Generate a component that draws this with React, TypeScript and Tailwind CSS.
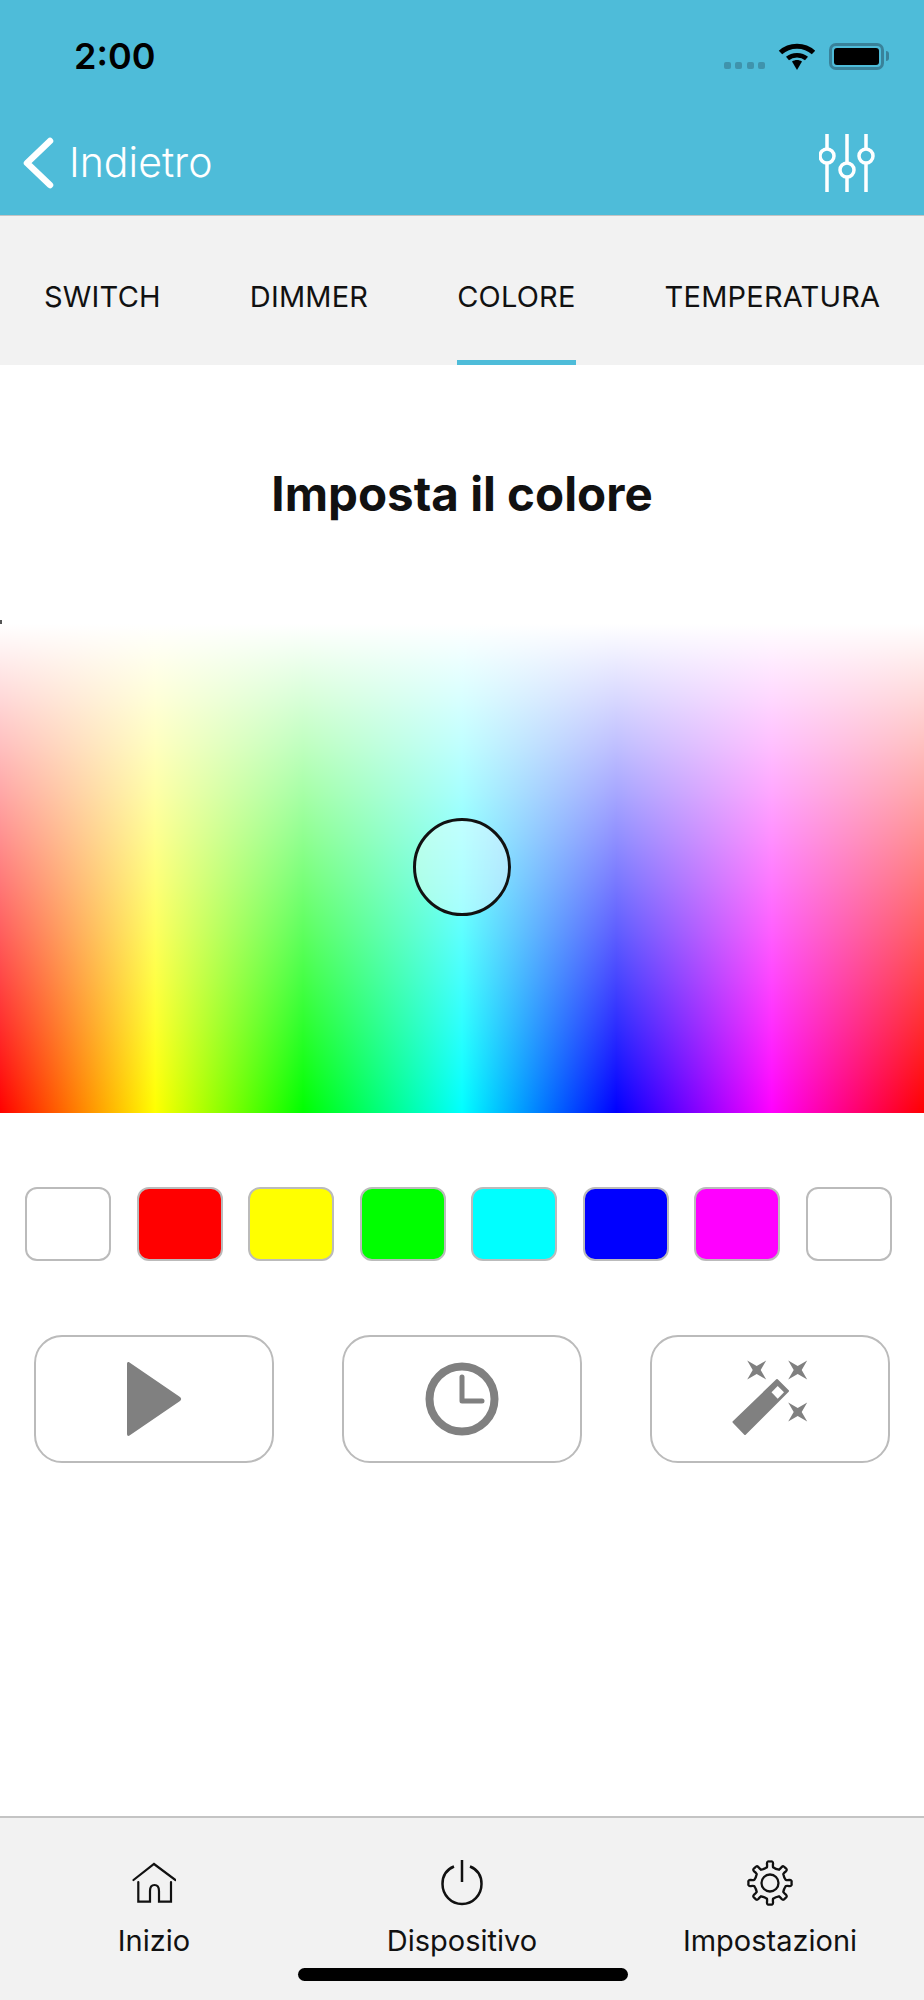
import React from "react";

const tabs = ["SWITCH", "DIMMER", "COLORE", "TEMPERATURA"];
const swatches = [
  "bg-white",
  "bg-[#ff0000]",
  "bg-[#ffff00]",
  "bg-[#00ff00]",
  "bg-[#00ffff]",
  "bg-[#0000ff]",
  "bg-[#ff00ff]",
  "bg-white",
];

function Wifi() {
  return (
    <svg width="38" height="27" viewBox="0 0 38 27" fill="none" stroke="#000">
      <path d="M2.5 9.5C11.5 1 26.5 1 35.5 9.5" strokeWidth="5" />
      <path d="M9.5 15.5C14.5 11 23.5 11 28.5 15.5" strokeWidth="4.5" />
      <path d="M14 18.5L19 27L24 18.5C21 16.5 17 16.5 14 18.5Z" fill="#000" stroke="none" />
    </svg>
  );
}

function Battery() {
  return (
    <div className="flex items-center">
      <div className="h-[27px] w-[55px] rounded-[7px] border-[3px] border-[#39829a] p-[2px]">
        <div className="h-full w-full rounded-[3px] bg-black" />
      </div>
      <div className="ml-[2px] h-[10px] w-[3px] rounded-r-full bg-[#39829a]" />
    </div>
  );
}

function Sliders() {
  return (
    <svg width="56" height="58" viewBox="0 0 56 58" fill="none" stroke="#fff" strokeWidth="3.5">
      <path d="M8 0V15M8 29V58M28 0V29M28 43V58M47 0V15M47 29V58" />
      <circle cx="8" cy="22" r="7" />
      <circle cx="28" cy="36" r="7" />
      <circle cx="47" cy="22" r="7" />
    </svg>
  );
}

function PlayIcon() {
  return (
    <svg width="56" height="76" viewBox="0 0 56 76" fill="#808080">
      <path d="M1 3C1 1 2.500 0.500 3.500 1.500L54 36C55.500 37 55.500 39 54 40L3.500 74.500C2.500 75.500 1 75 1 73Z" />
    </svg>
  );
}

function ClockIcon() {
  return (
    <svg width="76" height="76" viewBox="0 0 76 76" fill="none" stroke="#808080">
      <circle cx="38" cy="38" r="32.500" strokeWidth="8" />
      <path d="M38 16V40H58" strokeWidth="5" strokeLinecap="round" strokeLinejoin="round" />
    </svg>
  );
}

function Star({ x, y }: { x: number; y: number }) {
  return (
    <path
      transform={`translate(${x} ${y})`}
      d="M-9.500 -9.500L0 -4L9.500 -9.500L4 0L9.500 9.500L0 4L-9.500 9.500L-4 0Z"
    />
  );
}

function WandIcon() {
  return (
    <svg width="80" height="78" viewBox="0 0 80 78" fill="#808080">
      <path
        d="M3.500 62L47 20L58 31L15 74Z"
        stroke="#808080"
        strokeWidth="2"
        strokeLinejoin="round"
      />
      <path d="M47.700 26L54 32.300L47.700 38.700L41.500 32.300Z" fill="#fff" />
      <Star x={26.700} y={10} />
      <Star x={67.700} y={10} />
      <Star x={67.700} y={52} />
    </svg>
  );
}

function HomeIcon() {
  return (
    <svg width="44" height="42" viewBox="0 0 44 42" fill="none" stroke="#111" strokeWidth="2.200" strokeLinecap="round">
      <path d="M1.500 18L22 2L43.500 18" />
      <path d="M6.300 20V39.700H18V29Q18 23 22.500 23Q27 23 27 29V39.700H39V20" />
    </svg>
  );
}

function PowerIcon() {
  return (
    <svg width="42" height="46" viewBox="0 0 42 46" fill="none" stroke="#111" strokeWidth="2.500">
      <path d="M13 6.500C5.500 9.500 1.500 16 1.500 24C1.500 35 10 44 21 44C32 44 40.500 35 40.500 24C40.500 16 36.500 9.500 29 6.500" />
      <path d="M21 0V22" />
    </svg>
  );
}

function gearPath() {
  const pts: string[] = [];
  for (let i = 0; i < 8; i++) {
    const a = (i * Math.PI) / 4 - Math.PI / 2;
    const at = (r: number, d: number) => {
      const t = a + (d * Math.PI) / 180;
      return `${(23 + r * Math.cos(t)).toFixed(2)} ${(23 + r * Math.sin(t)).toFixed(2)}`;
    };
    pts.push(`${i === 0 ? "M" : "L"}${at(16, -11)}`);
    pts.push(`Q${at(17.500, -9)} ${at(19.500, -9)}`);
    pts.push(`Q${at(22.500, -8)} ${at(21.500, 0)}`);
    pts.push(`Q${at(22.500, 8)} ${at(19.500, 9)}`);
    pts.push(`Q${at(17.500, 9)} ${at(16, 11)}`);
    const b = a + (22.5 * Math.PI) / 180;
    pts.push(`Q${(23 + 15 * Math.cos(b)).toFixed(2)} ${(23 + 15 * Math.sin(b)).toFixed(2)} ${at(16, 34)}`);
  }
  return pts.join(" ") + "Z";
}

function GearIcon() {
  return (
    <svg width="46" height="46" viewBox="0 0 46 46" fill="none" stroke="#111" strokeWidth="2.300" strokeLinejoin="round">
      <path d={gearPath()} />
      <circle cx="23" cy="23" r="8.500" />
    </svg>
  );
}

function NavItem({ icon, label }: { icon: React.ReactNode; label: string }) {
  return (
    <div className="flex flex-col items-center">
      <div className="flex h-[46px] items-center">{icon}</div>
      <span className="mt-[15px] text-[29px] leading-[40px]">{label}</span>
    </div>
  );
}

export default function App() {
  return (
    <div className="flex min-h-[2000px] w-[924px] flex-col bg-white font-['Inter',sans-serif] text-[#111]">
      {/* Header */}
      <div className="h-[216px] border-b border-[#c4c4c4] bg-[#4ebcd9]">
        <div className="flex h-[112px] items-center justify-between pl-[74px] pr-[35px]">
          <span className="text-[36px] font-semibold text-black">2:00</span>
          <div className="flex items-center gap-[13px]">
            <div className="mt-[18px] flex gap-[4.500px]">
              {[0, 1, 2, 3].map((i) => (
                <div key={i} className="h-[7px] w-[7px] rounded-[2px] bg-[#3f93ac]" />
              ))}
            </div>
            <Wifi />
            <Battery />
          </div>
        </div>
        <div className="mt-[20px] flex items-center justify-between pl-[23px] pr-[49px]">
          <div className="flex items-center gap-[15px]">
            <svg width="31" height="52" viewBox="0 0 31 52" fill="none" stroke="#fff" strokeWidth="6.500" strokeLinecap="round" strokeLinejoin="round">
              <path d="M27 4L4 26L27 48" />
            </svg>
            <span className="text-[41px] font-light text-white">Indietro</span>
          </div>
          <Sliders />
        </div>
      </div>

      {/* Tabs */}
      <div className="flex h-[149px] gap-[89px] bg-[#f2f2f2] pl-[44px]">
        {tabs.map((tab) => (
          <div
            key={tab}
            className={`flex h-full items-center border-b-[5px] pt-[17px] text-[29px] tracking-[0.2px] ${
              tab === "COLORE" ? "border-[#4ebcd9]" : "border-transparent"
            }`}
          >
            {tab}
          </div>
        ))}
      </div>

      <h1 className="mt-[101px] text-center text-[47.500px] font-bold leading-[56px]">Imposta il colore</h1>

      {/* Color picker */}
      <div className="relative mt-[102px] flex h-[489px] items-center justify-center bg-[linear-gradient(to_bottom,#ffffff,#ffffff00),linear-gradient(to_right,#ff0000_0%,#ffff00_16.8%,#00ff00_32.8%,#00ffff_50%,#0000ff_66.7%,#ff00ff_83.5%,#ff0000_100%)] pb-[4px]">
        <div className="absolute left-0 top-[-4px] h-[4px] w-[2px] bg-[#555]" />
        <div className="h-[98px] w-[98px] rounded-full border-[3px] border-[#111] bg-white/40" />
      </div>

      {/* Swatches */}
      <div className="mt-[74px] flex justify-between pl-[25px] pr-[32px]">
        {swatches.map((color, i) => (
          <div key={i} className={`h-[74px] w-[86px] rounded-[12px] border-2 border-[#bbbbbb] ${color}`} />
        ))}
      </div>

      {/* Actions */}
      <div className="mt-[74px] flex justify-between pl-[34px] pr-[34px]">
        {[<PlayIcon key="play" />, <ClockIcon key="clock" />, <WandIcon key="wand" />].map((icon, i) => (
          <button key={i} className="flex h-[128px] w-[240px] items-center justify-center rounded-[28px] border-2 border-[#bbbbbb] bg-white">
            {icon}
          </button>
        ))}
      </div>

      {/* Bottom nav */}
      <div className="relative mt-auto grid h-[184px] grid-cols-3 border-t-2 border-[#c4c4c4] bg-[#f2f2f2] pt-[42px]">
        <NavItem icon={<HomeIcon />} label="Inizio" />
        <NavItem icon={<PowerIcon />} label="Dispositivo" />
        <NavItem icon={<GearIcon />} label="Impostazioni" />
        <div className="absolute bottom-[19px] left-[298px] h-[13px] w-[330px] rounded-full bg-black" />
      </div>
    </div>
  );
}
